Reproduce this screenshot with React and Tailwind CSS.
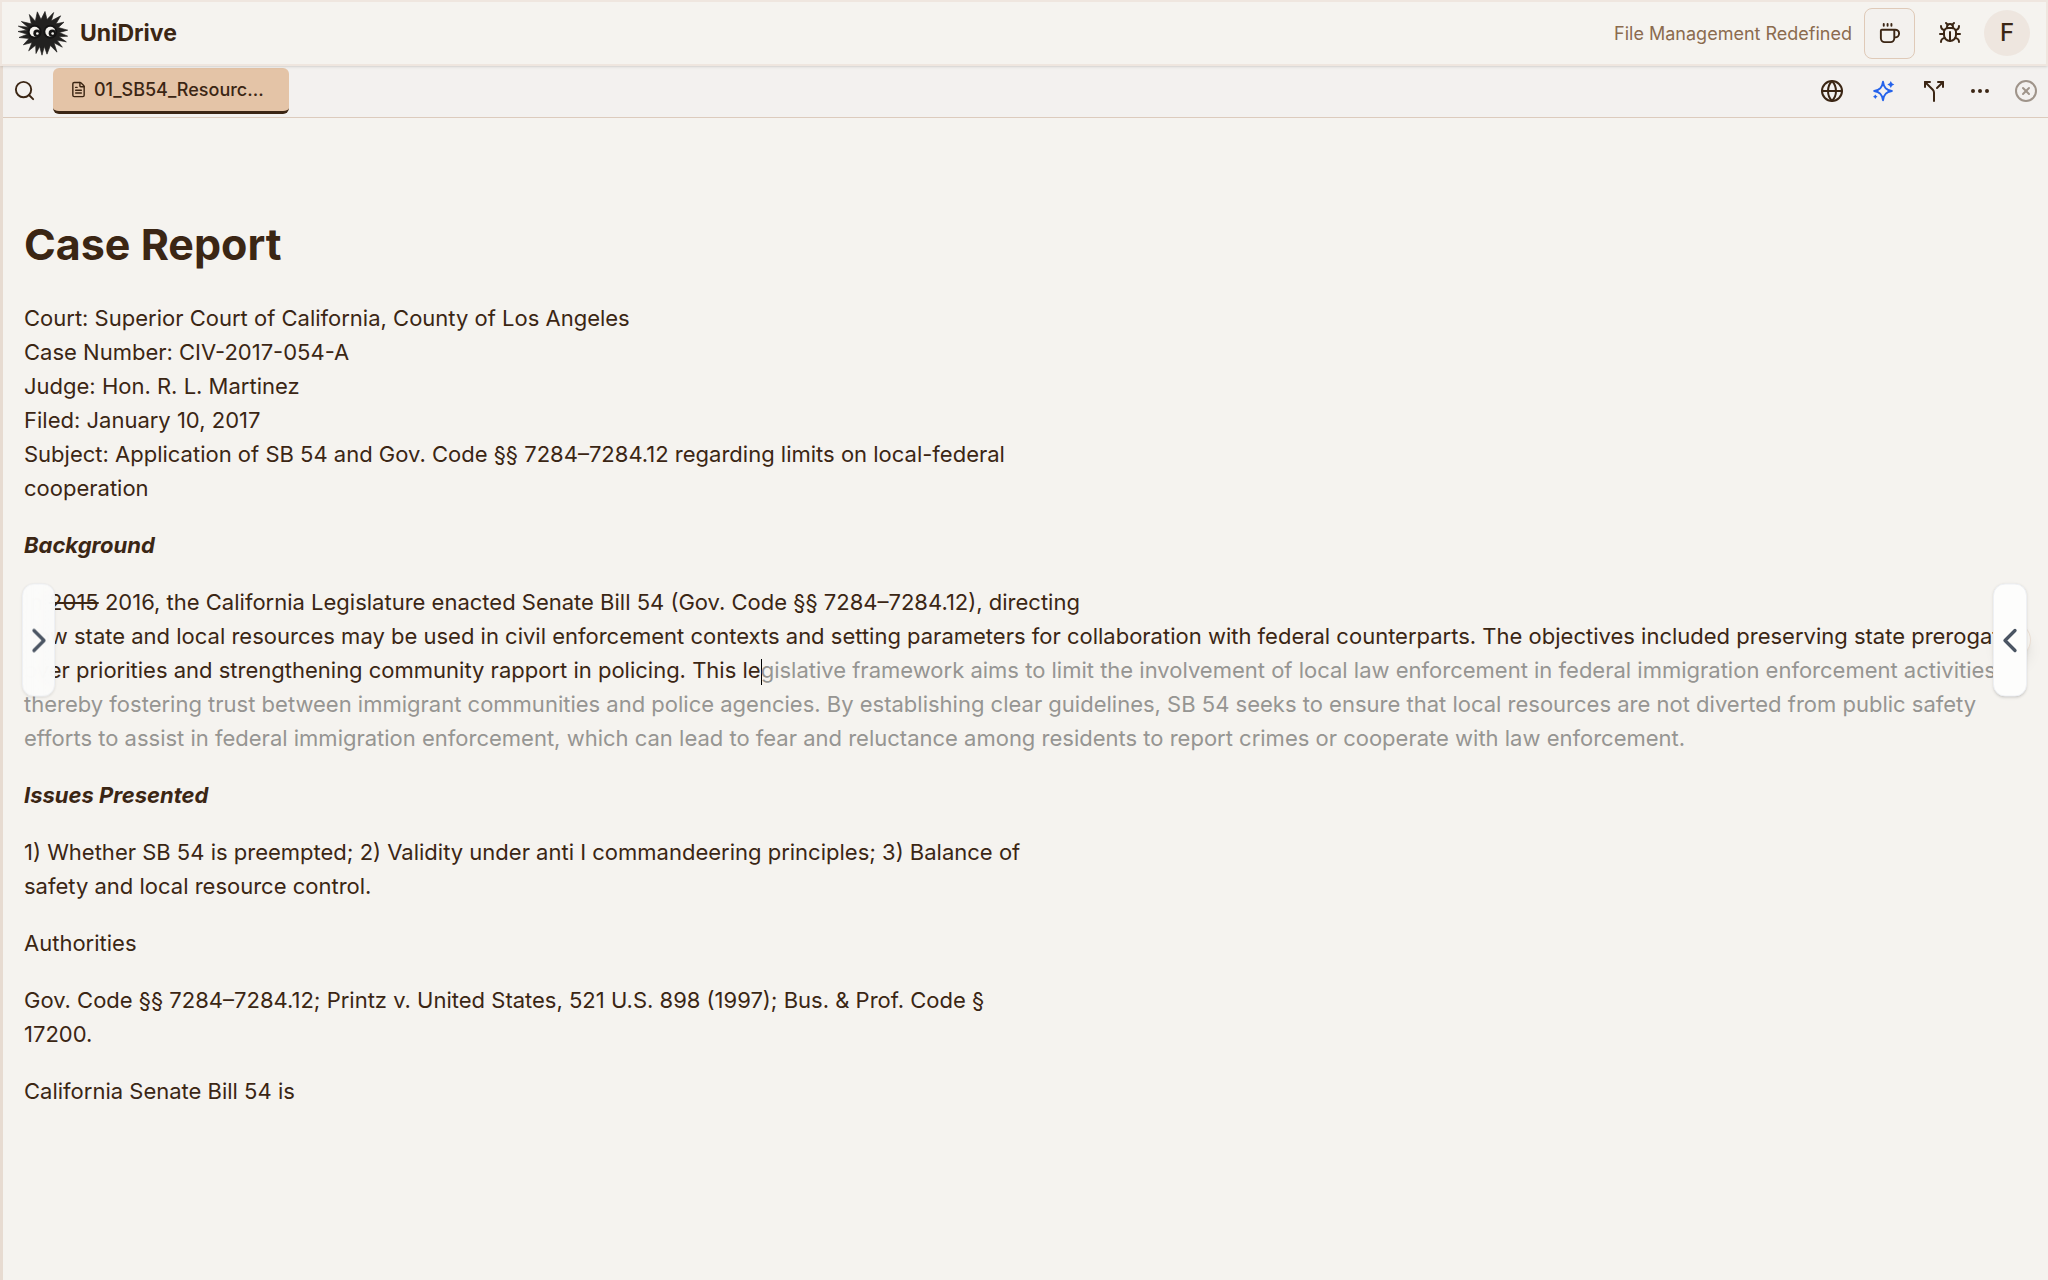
// src/App.jsx
import React from "react";
import {
  Bug, ChevronLeft, ChevronRight, CircleX, Coffee, Ellipsis, FileText, Globe, Search, Split,
} from "lucide-react";

function SootLogo() {
  return (
    <svg viewBox="0 0 150 134" className="h-[45px] w-[50px]" aria-hidden="true">
      <path
        fill="#222120"
        d="M34 10 L52 30 L58 2 L69 25 L81 1 L87 25 L107 4 L100 29 L128 14 L114 38 L138 33 L121 49 L149 57 L124 64 L149 75 L123 77 L145 92 L117 87 L133 108 L108 95 L117 123 L97 103 L87 129 L79 106 L72 132 L65 106 L54 127 L53 102 L32 119 L42 94 L16 101 L33 82 L3 79 L28 69 L0 61 L27 57 L1 45 L30 48 L10 31 L40 38 Z"
        stroke="#222120"
        strokeWidth="2"
        strokeLinejoin="round"
      />
      <circle cx="50" cy="62" r="21" fill="#151414" />
      <circle cx="97" cy="62" r="21" fill="#151414" />
      <circle cx="50" cy="62" r="15" fill="#f5f3ef" />
      <circle cx="97" cy="62" r="15" fill="#f5f3ef" />
      <circle cx="57" cy="66" r="11" fill="#151414" />
      <circle cx="103" cy="66" r="11" fill="#151414" />
      <circle cx="58" cy="67" r="4" fill="#f5f3ef" />
      <circle cx="104" cy="67" r="4" fill="#f5f3ef" />
    </svg>
  );
}

function SparkleIcon() {
  return (
    <svg viewBox="0 0 24 24" className="size-6" fill="none" stroke="currentColor" strokeWidth="2" strokeLinejoin="round" aria-hidden="true">
      <path d="M12 2.8 C12.8 8.6 15 11.2 20.8 12 C15 12.8 12.8 15.4 12 21.2 C11.2 15.4 9 12.8 3.2 12 C9 11.2 11.2 8.6 12 2.8 Z" />
      <path fill="currentColor" stroke="none" d="M19.8 2 L21 4.3 L23.3 5.5 L21 6.7 L19.8 9 L18.6 6.7 L16.3 5.5 L18.6 4.3 Z" />
      <path fill="currentColor" stroke="none" d="M4.3 15.4 L5.2 16.8 L6.6 17.7 L5.2 18.6 L4.3 20 L3.4 18.6 L2 17.7 L3.4 16.8 Z" />
    </svg>
  );
}

function Header() {
  return (
    <header className="relative flex h-[66px] items-center justify-between border-2 border-[#efe6df] bg-[#f5f3ef] px-4 shadow-sm">
      <div className="flex items-center gap-3">
        <SootLogo />
        <span className="text-[23px] font-bold">UniDrive</span>
      </div>
      <div className="flex items-center gap-[9px]">
        <span className="mr-[3px] text-[18px] text-[#8b6b4e]">File Management Redefined</span>
        <button aria-label="Buy a coffee" className="flex size-[51px] items-center justify-center rounded-lg border border-[#dfcab8] bg-[#f3f1ee]">
          <Coffee size={23} />
        </button>
        <button aria-label="Report a bug" className="flex size-[51px] items-center justify-center">
          <Bug size={24} />
        </button>
        <button aria-label="Account" className="flex size-[46px] items-center justify-center rounded-full bg-[#eee6df] text-[24px] font-medium">
          F
        </button>
      </div>
    </header>
  );
}

function Toolbar() {
  return (
    <div className="flex h-[52px] items-center justify-between border-b border-[#dccbbd] bg-[#f3f1ef] px-[10px] pb-[2px]">
      <div className="flex items-center gap-[17px]">
        <button aria-label="Search" className="flex items-center"><Search size={23} /></button>
        <button className="flex h-[46px] w-[236px] items-center gap-[7px] rounded-md border-b-3 border-[#3b2614] bg-[#e4c4a7] px-[17px] text-[18px] font-medium">
          <FileText size={17} className="shrink-0" />
          01_SB54_Resourc...
        </button>
      </div>
      <div className="flex items-center gap-[22px]">
        <div className="flex items-center gap-[27px]">
          <button aria-label="Language"><Globe size={24} /></button>
          <button aria-label="Assistant" className="text-[#2563eb]"><SparkleIcon /></button>
          <button aria-label="Split view"><Split size={24} /></button>
        </div>
        <button aria-label="More"><Ellipsis size={24} /></button>
        <button aria-label="Close" className="text-[#9f948a]"><CircleX size={24} /></button>
      </div>
    </div>
  );
}

function Report() {
  return (
    <article className="px-[21px] pt-24 text-[22px] leading-[34px]">
      <h1 className="mb-[27px] text-[43px] font-bold leading-[60px]">Case Report</h1>
      <div className="space-y-[23px] whitespace-nowrap">
        <p>
          Court: Superior Court of California, County of Los Angeles<br />
          Case Number: CIV-2017-054-A<br />
          Judge: Hon. R. L. Martinez<br />
          Filed: January 10, 2017<br />
          Subject: Application of SB 54 and Gov. Code §§ 7284–7284.12 regarding limits on local-federal<br />
          cooperation
        </p>
        <h2 className="font-bold italic">Background</h2>
        <p>
          In <s>2015</s> 2016, the California Legislature enacted Senate Bill 54 (Gov. Code §§ 7284–7284.12), directing<br />
          how state and local resources may be used in civil enforcement contexts and setting parameters for collaboration with federal counterparts. The objectives included preserving state prerogativ<br />
          over priorities and strengthening community rapport in policing. This le
          <span className="-mr-px inline-block h-[26px] w-px bg-black align-middle" />
          <span className="text-[#969592]">
            gislative framework aims to limit the involvement of local law enforcement in federal immigration enforcement activities,<br />
            thereby fostering trust between immigrant communities and police agencies. By establishing clear guidelines, SB 54 seeks to ensure that local resources are not diverted from public safety<br />
            efforts to assist in federal immigration enforcement, which can lead to fear and reluctance among residents to report crimes or cooperate with law enforcement.
          </span>
        </p>
        <h2 className="font-bold italic">Issues Presented</h2>
        <p>
          1) Whether SB 54 is preempted; 2) Validity under anti I commandeering principles; 3) Balance of<br />
          safety and local resource control.
        </p>
        <p>Authorities</p>
        <p>
          Gov. Code §§ 7284–7284.12; Printz v. United States, 521 U.S. 898 (1997); Bus. &amp; Prof. Code §<br />
          17200.
        </p>
        <p>California Senate Bill 54 is</p>
      </div>
    </article>
  );
}

export default function App() {
  return (
    <div className="relative flex min-h-screen flex-col overflow-hidden bg-[#f5f3ef] font-['Inter',sans-serif] text-[#3b2614]">
      <Header />
      <main className="flex-1 border-l-3 border-[#e7dbd1]">
        <Toolbar />
        <Report />
      </main>

      {/* side panel handles */}
      <button aria-label="Open left panel" className="absolute left-[22px] top-1/2 flex h-[113px] w-[33px] -translate-y-1/2 items-center justify-center rounded-xl border border-[#eef0f4] bg-linear-to-r from-[#fbfbfa] to-[#fbfbfa]/95 text-[#4b5563] shadow-sm backdrop-blur-md">
        <ChevronRight size={40} className="shrink-0" />
      </button>
      <span className="absolute right-[17px] top-1/2 size-[36px] -translate-y-1/2 rounded-full border border-[#eaded3] bg-[#f5f3ef] shadow-lg" />
      <button aria-label="Open right panel" className="absolute right-[21px] top-1/2 flex h-[113px] w-[34px] -translate-y-1/2 items-center justify-center rounded-xl border border-[#eef0f4] bg-[#fdfdfc] text-[#4b5563] shadow-sm">
        <ChevronLeft size={40} className="shrink-0" />
      </button>
    </div>
  );
}
